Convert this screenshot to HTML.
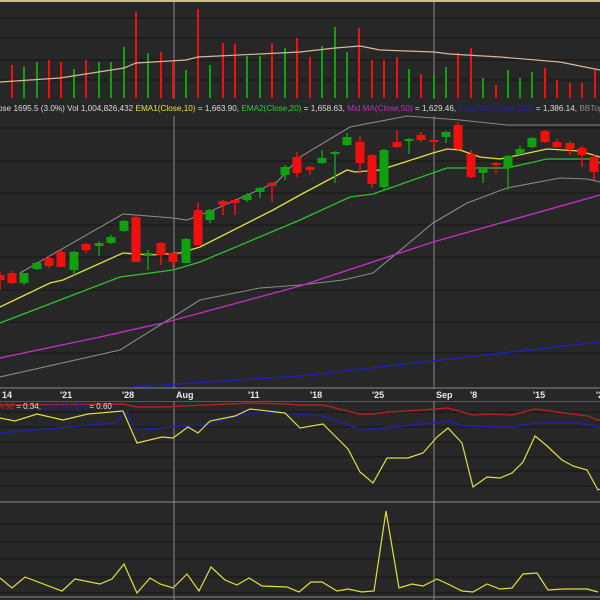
<!DOCTYPE html>
<html><head><meta charset="utf-8"><style>
html,body{margin:0;padding:0;background:#262626;}
svg{display:block;font-family:"Liberation Sans",Arial,sans-serif;}
</style></head><body>
<svg id="s" width="600" height="600" viewBox="0 0 600 600" xmlns="http://www.w3.org/2000/svg">
<rect width="600" height="600" fill="#272727"/>
<g id="grid" stroke="#151515" stroke-width="1"></g>
<line x1="0" y1="1" x2="600" y2="1" stroke="#c8c090" stroke-width="2"/>
<line x1="174" y1="2" x2="174" y2="600" stroke="#8a8a8a" stroke-width="1"/>
<line x1="434" y1="2" x2="434" y2="600" stroke="#8a8a8a" stroke-width="1"/>
<line x1="0" y1="388" x2="600" y2="388" stroke="#8a8a8a"/>
<line x1="0" y1="401" x2="600" y2="401" stroke="#8a8a8a"/>
<line x1="0" y1="502" x2="600" y2="502" stroke="#8a8a8a"/>
<line x1="0" y1="597" x2="600" y2="597" stroke="#8a8a8a"/>
<rect x="0" y="389" width="600" height="12" fill="#272727"/>
<rect x="0" y="99" width="600" height="17" fill="#272727"/>
<g id="vol"></g>
<polyline fill="none" stroke="#d8b898" stroke-width="1.2" points="0,82 60,78 124,68 136,63 186,60 198,57 300,52 335,48 360,46 380,50 434,52 450,54 500,57 560,62 600,70"/>
<g fill="none" stroke-width="1.1">
<polyline stroke="#8a8a8a" points="20,273 123,214 173,218 187,220 213,210 277,182 300,157 350,127 407,116 460,120 507,125 600,125"/>
<polyline stroke="#8a8a8a" points="0,377 120,350 173,317 200,300 260,288 300,285 343,280 373,273 433,223 467,203 507,188 560,178 587,179 600,182"/>
<polyline stroke="#2020b0" stroke-width="1.5" points="133,387 300,376 600,342"/>
<polyline stroke="#c030c0" stroke-width="1.4" points="0,358 100,337 167,322 300,286 433,242 600,195"/>
<polyline stroke="#30c030" stroke-width="1.3" points="0,323 120,277 173,270 200,262 300,220 350,197 373,194 447,168 507,168 547,159 590,159 600,163"/>
<polyline stroke="#e0e040" stroke-width="1.3" points="0,307 50,283 63,280 123,253 150,255 180,253 200,247 273,210 300,195 347,170 355,172 380,170 433,153 447,149 460,150 480,157 500,159 533,152 547,149 580,151 600,157"/>
</g>
<g id="cdl"></g>
<text x="-2" y="111" font-size="8.2" fill="#dcdcdc">ose 1695.5 (3.0%) Vol 1,004,826,432 <tspan fill="#e8e040">EMA1(Close,10)</tspan> = 1,663.90, <tspan fill="#30d030">EMA2(Close,20)</tspan> = 1,658.63, <tspan fill="#c030c0">Mid MA(Close,50)</tspan> = 1,629.46, <tspan fill="#2020b0">Long MA(Close,200)</tspan> = 1,386.14, <tspan fill="#888">BBTop</tspan></text>
<g font-size="9" fill="#e8e8e8" font-weight="bold">
<text x="2" y="398">14</text><text x="60" y="398">'21</text><text x="122" y="398">'28</text><text x="176" y="398">Aug</text><text x="248" y="398">'11</text><text x="310" y="398">'18</text><text x="372" y="398">'25</text><text x="436" y="398">Sep</text><text x="470" y="398">'8</text><text x="533" y="398">'15</text><text x="596" y="398">'2</text>
</g>
<g fill="none" stroke-width="1.2">
<polyline stroke="#2020a8" stroke-width="1.5" points="0,433 115,423 127,412 135,430 173,427 204,425 250,413 285,413 323,416 362,430 423,424 450,421 462,426 512,427 535,423 577,423 600,427"/>
<polyline stroke="#b02020" stroke-width="1.5" points="0,405 123,404 137,407 162,407 250,403 285,404 300,405 323,405 360,414 372,414 388,412 423,410 448,408 473,415 488,414 512,415 535,409 565,413 588,416 597,420 600,420"/>
<polyline stroke="#e0e040" points="0,418 15,421 37,414 63,420 88,414 123,411 137,443 162,437 173,438 188,427 198,433 210,421 235,416 250,409 285,413 300,428 323,424 348,449 360,472 373,483 387,458 408,458 423,453 437,437 448,428 462,443 473,487 487,477 500,478 512,473 523,462 535,436 546,445 562,460 573,466 587,470 598,490 600,489"/>
<polyline stroke="#e0e040" points="0,578 12,588 25,577 62,591 75,579 100,584 112,579 124,564 137,593 150,578 160,584 173,588 187,574 199,591 211,567 225,580 237,585 249,578 262,586 287,587 299,592 311,582 322,582 337,591 348,589 362,592 374,591 386,511 399,588 412,584 423,586 437,579 450,585 462,591 473,592 487,584 500,589 512,588 523,574 537,573 548,590 563,589 587,589 598,592"/>
</g>
<text x="-2" y="409" font-size="8" fill="#e0e0e0"><tspan fill="#d02020">A 50</tspan> = 0.34, <tspan fill="#2020b0">Low MA 200</tspan> = 0.60</text>
</svg>
<script>
var NS="http://www.w3.org/2000/svg";
function el(p,t,a){var e=document.createElementNS(NS,t);for(var k in a)e.setAttribute(k,a[k]);p.appendChild(e);return e;}
var g=document.getElementById('grid');
[18,38,60,80,128,161,193,225,257,290,322,353,412,427,442,457,471,486,524,542,559,577,593].forEach(function(y){el(g,'line',{x1:0,y1:y,x2:600,y2:y});});
var R="#f01010",G="#10a010";
var v=document.getElementById('vol');
[[12,65,R],[24,67,G],[37,62,G],[49,60,R],[61,62,R],[74,69,G],[86,60,R],[99,62,G],[111,62,G],[124,47,G],[136,12,R],[148,53,G],[161,52,R],[173,62,R],[186,70,G],[198,9,R],[210,65,G],[223,43,R],[235,44,R],[247,56,G],[260,56,G],[272,43,R],[285,48,G],[297,38,R],[310,57,R],[322,46,G],[335,27,G],[347,52,G],[359,28,R],[372,60,R],[384,60,R],[397,57,R],[409,69,G],[421,74,R],[434,75,G],[446,67,G],[458,53,R],[471,48,R],[483,78,G],[496,85,R],[508,70,G],[520,78,G],[532,72,G],[545,68,R],[557,80,R],[570,83,R],[582,83,R],[595,70,R]].forEach(function(b){el(v,'rect',{x:b[0]-1,y:b[1],width:2,height:98-b[1],fill:b[2]});});
var c=document.getElementById('cdl');
[[0,275,280,272,290,R],[12,273,283,271,284,R],[24,273,283,273,285,G],[37,263,269,262,270,G],[49,258,266,256,268,R],[61,252,267,250,267,R],[74,252,270,251,275,G],[86,244,250,243,253,R],[99,243,246,241,256,G],[111,237,243,235,244,G],[124,221,231,220,232,G],[136,217,262,216,262,R],[148,253,256,250,270,G],[161,243,255,242,265,R],[173,253,262,252,268,R],[186,239,263,238,263,G],[198,210,245,202,245,R],[210,210,220,209,223,G],[223,201,205,200,215,R],[235,200,203,199,215,R],[247,195,200,193,202,G],[260,188,192,187,198,G],[272,183,186,182,202,R],[285,167,175,165,180,G],[297,157,173,152,177,R],[310,167,170,166,175,R],[322,158,163,150,164,G],[335,152,154,151,183,G],[347,137,145,133,146,G],[360,142,163,136,174,R],[372,155,184,154,188,R],[384,150,187,149,190,G],[397,142,147,130,148,R],[409,139,141,138,154,G],[421,135,140,132,142,R],[434,140,142,139,148,R],[446,132,137,131,143,G],[458,125,149,122,150,R],[471,154,177,150,178,R],[483,169,173,168,183,G],[496,163,165,162,173,R],[508,156,168,155,190,G],[520,149,154,146,155,G],[532,138,147,137,148,G],[545,131,142,130,143,R],[557,142,147,139,148,R],[570,143,149,141,155,R],[582,148,155,146,167,R],[594,157,172,155,180,R]].forEach(function(k){
el(c,'line',{x1:k[0],y1:k[3],x2:k[0],y2:k[4],stroke:k[5],'stroke-width':1.5});
var h=Math.max(2,k[2]-k[1]);
el(c,'rect',{x:k[0]-4.5,y:k[1],width:9,height:h,fill:k[5]});
});
</script>
</body></html>
